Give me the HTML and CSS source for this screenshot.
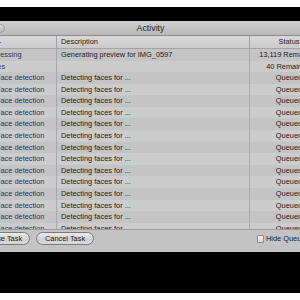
FILE: index.html
```html
<!DOCTYPE html>
<html>
<head>
<meta charset="utf-8">
<link rel="stylesheet" href="styles.css">
</head>
<body>
<div class="page">
  <div class="strip-white"></div>
  <div class="strip-black"></div>
  <div class="window">
    <div class="titlebar">
      <span class="winbtn"></span>
      <span class="title">Activity</span>
    </div>
    <div class="header row">
      <div class="cell c1"></div>
      <div class="cell c2">Description</div>
      <div class="cell c3">Status</div>
    </div>
    <div class="rows">
      <div class="row"><div class="cell c1 grp">Processing</div><div class="cell c2">Generating preview for IMG_0597</div><div class="cell c3">13,119 Remaining</div></div>
      <div class="row"><div class="cell c1 grp">Faces</div><div class="cell c2"></div><div class="cell c3">40 Remaining</div></div>
      <div class="row"><div class="cell c1">Face detection</div><div class="cell c2">Detecting faces for ...</div><div class="cell c3">Queued</div></div>
      <div class="row"><div class="cell c1">Face detection</div><div class="cell c2">Detecting faces for ...</div><div class="cell c3">Queued</div></div>
      <div class="row"><div class="cell c1">Face detection</div><div class="cell c2">Detecting faces for ...</div><div class="cell c3">Queued</div></div>
      <div class="row"><div class="cell c1">Face detection</div><div class="cell c2">Detecting faces for ...</div><div class="cell c3">Queued</div></div>
      <div class="row"><div class="cell c1">Face detection</div><div class="cell c2">Detecting faces for ...</div><div class="cell c3">Queued</div></div>
      <div class="row"><div class="cell c1">Face detection</div><div class="cell c2">Detecting faces for ...</div><div class="cell c3">Queued</div></div>
      <div class="row"><div class="cell c1">Face detection</div><div class="cell c2">Detecting faces for ...</div><div class="cell c3">Queued</div></div>
      <div class="row"><div class="cell c1">Face detection</div><div class="cell c2">Detecting faces for ...</div><div class="cell c3">Queued</div></div>
      <div class="row"><div class="cell c1">Face detection</div><div class="cell c2">Detecting faces for ...</div><div class="cell c3">Queued</div></div>
      <div class="row"><div class="cell c1">Face detection</div><div class="cell c2">Detecting faces for ...</div><div class="cell c3">Queued</div></div>
      <div class="row"><div class="cell c1">Face detection</div><div class="cell c2">Detecting faces for ...</div><div class="cell c3">Queued</div></div>
      <div class="row"><div class="cell c1">Face detection</div><div class="cell c2">Detecting faces for ...</div><div class="cell c3">Queued</div></div>
      <div class="row"><div class="cell c1">Face detection</div><div class="cell c2">Detecting faces for ...</div><div class="cell c3">Queued</div></div>
      <div class="row"><div class="cell c1">Face detection</div><div class="cell c2">Detecting faces for ...</div><div class="cell c3">Queued</div></div>
      <div class="row"><div class="cell c1">Face detection</div><div class="cell c2">Detecting faces for ...</div><div class="cell c3">Queued</div></div>
    </div>
    <div class="toolbar">
      <button class="btn btn-first">Pause Task</button>
      <button class="btn">Cancel Task</button>
      <label class="check"><span class="box"></span><span class="check-text">Hide Queued Tasks</span></label>
    </div>
  </div>
  <div class="strip-black bottom"></div>
</div>
</body>
</html>
```
FILE: styles.css
```css
html, body {
  margin: 0;
  padding: 0;
  background: #fff;
}
body {
  width: 300px;
  height: 300px;
  overflow: hidden;
  font-family: "Liberation Sans", Arial, sans-serif;
  font-size: 7.4px;
  color: #1a1a1a;
}
.page {
  display: flex;
  flex-direction: column;
  width: 300px;
}
.strip-white { height: 7px; background: #fff; }
.strip-black { height: 14px; background: #000; }
.strip-black.bottom { height: 41px; }

.window {
  height: 231px;
  display: flex;
  flex-direction: column;
  overflow: hidden;
  background: #c3c3c3;
}
.titlebar {
  height: 14px;
  flex: none;
  display: flex;
  align-items: center;
  background: linear-gradient(#d0d0d0, #b9b9b9);
  border-bottom: 1px solid #8c8c8c;
}
.winbtn {
  width: 7px;
  height: 7px;
  margin-left: -4px;
  border-radius: 50%;
  border: 1px solid #9a9a9a;
  background: linear-gradient(#dcdcdc, #b4b4b4);
  flex: none;
}
.title {
  flex: 1;
  text-align: center;
  font-size: 8.8px;
  color: #1e1e1e;
  padding-right: 4px;
}

.row {
  display: grid;
  grid-template-columns: 97px 193px 78px;
  margin-left: -40px;
  height: 11.58px;
  line-height: 11.58px;
  white-space: nowrap;
}
.cell {
  overflow: hidden;
  border-right: 1px solid #a9a9a9;
  box-sizing: border-box;
}
.c1 { padding-left: 36px; color: #28335f; }
.c1.grp { padding-left: 25px; }
.c2 { padding-left: 4px; }
.c3 { text-align: center; border-right: none; }

.header {
  height: 13px;
  line-height: 12px;
  flex: none;
  background: linear-gradient(#d8d8d8, #cbcbcb);
  border-bottom: 1px solid #a4a4a4;
  box-sizing: border-box;
}
.header .cell { border-right-color: #a0a0a0; }
.header .c1 {
  background: linear-gradient(90deg, transparent 38px, #5570b0 38px, #5570b0 41px, transparent 41px) no-repeat 0 6px / 100% 1px;
}

.rows {
  height: 180px;
  flex: none;
  overflow: hidden;
}
.rows .row:nth-child(odd) { background: #c4c4c4; }
.rows .row:nth-child(even) { background: #cccccc; }

.toolbar {
  height: 23px;
  flex: none;
  box-sizing: border-box;
  border-top: 1px solid #9c9c9c;
  background: #c3c3c3;
  display: flex;
  align-items: flex-start;
  padding-top: 2px;
  gap: 6px;
}
.btn {
  font-family: "Liberation Sans", Arial, sans-serif;
  font-size: 7.4px;
  color: #1a1a1a;
  height: 13px;
  line-height: 11px;
  padding: 0 8px;
  border: 1px solid #7a7a7a;
  border-radius: 7px;
  background: linear-gradient(#ececec, #d0d0d0 55%, #d8d8d8);
  box-sizing: border-box;
  white-space: nowrap;
  flex: none;
}
.btn-first { margin-left: -25px; width: 55px; }
.check {
  margin-left: auto;
  width: 43px;
  flex: none;
  display: flex;
  align-items: center;
  gap: 2px;
  height: 13px;
  white-space: nowrap;
  overflow: hidden;
}
.box {
  width: 7px;
  height: 8px;
  flex: none;
  box-sizing: border-box;
  border: 1px solid #8a8a8a;
  background: linear-gradient(#f2f2f2, #d8d8d8);
  border-radius: 1px;
}
.check-text { flex: none; }
```
